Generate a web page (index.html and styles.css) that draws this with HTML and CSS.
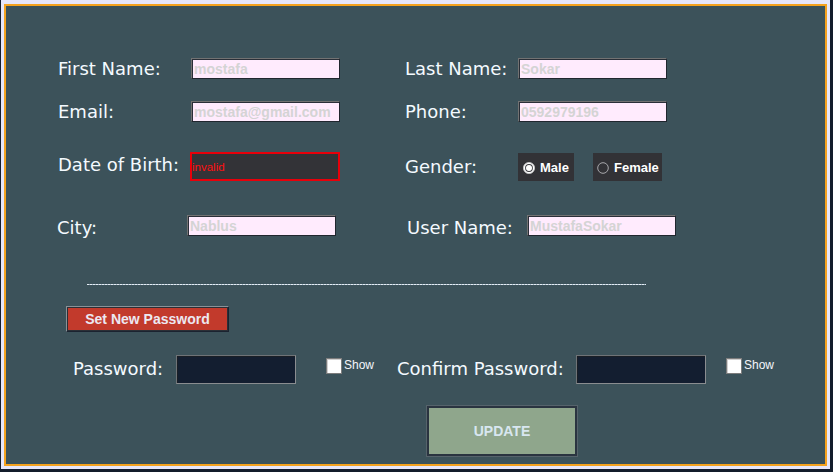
FILE: index.html
```html
<!DOCTYPE html>
<html lang="en">
<head>
<meta charset="utf-8">
<title>Update Profile</title>
<link rel="stylesheet" href="styles.css">
</head>
<body>
<div class="frame">
  <form class="panel">
    <div class="row row-a">
      <label class="lbl lbl-left">First Name:</label>
      <input class="field" type="text" value="mostafa" readonly>
      <label class="lbl lbl-right">Last Name:</label>
      <input class="field" type="text" value="Sokar" readonly>
    </div>
    <div class="row row-a row-2">
      <label class="lbl lbl-left">Email:</label>
      <input class="field" type="text" value="mostafa@gmail.com" readonly>
      <label class="lbl lbl-right">Phone:</label>
      <input class="field" type="text" value="0592979196" readonly>
    </div>
    <div class="row row-a row-3">
      <label class="lbl lbl-left lbl-dob">Date of Birth:</label>
      <div class="dob">invalid</div>
      <label class="lbl lbl-right lbl-gender">Gender:</label>
      <div class="radio radio-male">
        <svg class="radio-icon" width="12" height="12" viewBox="0 0 12 12"><circle cx="6" cy="6" r="5.6" fill="#ffffff" stroke="#c8c8c8" stroke-width="0.8"/><circle cx="6" cy="6" r="3.9" fill="#3a3a3e"/><circle cx="6" cy="6" r="3" fill="#ffffff"/></svg>
        <span>Male</span>
      </div>
      <div class="radio radio-female">
        <svg class="radio-icon" width="12" height="12" viewBox="0 0 12 12"><circle cx="6" cy="6" r="5.3" fill="none" stroke="#a8a8ac" stroke-width="1"/></svg>
        <span>Female</span>
      </div>
    </div>
    <div class="row row-4">
      <label class="lbl lbl-city">City:</label>
      <input class="field" type="text" value="Nablus" readonly>
      <label class="lbl lbl-user">User Name:</label>
      <input class="field" type="text" value="MustafaSokar" readonly>
    </div>
    <div class="separator"></div>
    <div class="row row-btn">
      <button type="button" class="btn-pass">Set New Password</button>
    </div>
    <div class="row row-pw">
      <label class="lbl lbl-pw">Password:</label>
      <div class="pw pw-1"></div>
      <span class="check"></span><span class="show">Show</span>
      <label class="lbl lbl-confirm">Confirm Password:</label>
      <div class="pw pw-2"></div>
      <span class="check check-2"></span><span class="show">Show</span>
    </div>
    <div class="row row-update">
      <button type="button" class="btn-update">UPDATE</button>
    </div>
  </form>
</div>
</body>
</html>
```
FILE: styles.css
```css
* { box-sizing: border-box; }

html, body {
  margin: 0;
  padding: 0;
}

body {
  background: #131c2b;
  width: 833px;
  height: 472px;
  overflow: hidden;
  font-family: "DejaVu Sans", Verdana, sans-serif;
}

.frame {
  margin: 0 3px 3px 1px;
  padding: 4px 3px 3px 3px;
  background: #e6e6fa;
  height: 469px;
}

.panel {
  margin: 0;
  height: 462px;
  border: 2px solid #f5a21e;
  background: #3c525a;
  padding-top: 52px;
  display: flex;
  flex-direction: column;
}

.row {
  display: flex;
  align-items: center;
}

.row-a {
  height: 21px;
  padding-left: 52px;
}

.row-2 { margin-top: 22px; }
.row-3 { margin-top: 30px; height: 29px; }

.lbl {
  color: #f4faff;
  font-size: 18px;
  line-height: 21px;
  white-space: nowrap;
  flex: none;
}

.lbl-left { width: 133px; }
.lbl-dob { width: 132px; padding-bottom: 4px; }
.lbl-right { width: 113px; margin-left: 65px; }
.lbl-gender { margin-left: 65px; }

.field {
  flex: none;
  width: 149px;
  height: 21px;
  margin: 0;
  padding: 0 2px;
  background: #ffebfd;
  border-style: solid;
  border-width: 1px;
  border-color: #727272 #20262e #20262e #727272;
  box-shadow: inset 1px 1px 0 #2a2f38;
  color: #d4d4d4;
  font-family: "Liberation Sans", Arial, sans-serif;
  font-weight: bold;
  font-size: 14px;
  outline: none;
}

.dob {
  flex: none;
  width: 150px;
  height: 29px;
  background: #333337;
  border: 2px solid #e8000a;
  color: #ff1010;
  font-family: "Liberation Sans", Arial, sans-serif;
  font-size: 11.5px;
  line-height: 27px;
  padding: 2px 0 0 0;
  display: flex;
  align-items: center;
}

.radio {
  flex: none;
  height: 28px;
  background: #323236;
  display: flex;
  align-items: center;
  color: #ffffff;
  font-family: "Liberation Sans", Arial, sans-serif;
  font-weight: bold;
  font-size: 13px;
  padding-top: 2px;
}

.radio-male { width: 56px; padding-left: 5px; }
.radio-female { width: 69px; padding-left: 4px; margin-left: 19px; }

.radio-icon { flex: none; margin-right: 5px; }

.row-4 {
  margin-top: 34px;
  height: 21px;
  padding-left: 51px;
}

.row-4 .lbl { padding-top: 4px; }
.lbl-city { width: 130px; }
.lbl-user { width: 120px; margin-left: 71px; }

.separator {
  margin: 48px 0 0 81px;
  width: 559px;
  height: 1px;
  background: repeating-linear-gradient(90deg, #e4ecf4 0 2px, #9fb2c2 2px 3px);
}

.row-btn {
  margin-top: 21px;
  padding-left: 60px;
}

.btn-pass {
  width: 163px;
  height: 26px;
  margin: 0;
  padding: 0;
  background: #c23a2c;
  border-style: solid;
  border-width: 1px;
  border-color: #8a9298 #1b2330 #1b2330 #8a9298;
  box-shadow: inset 0 0 0 1px #2b2f36;
  color: #ece8f2;
  font-family: "Liberation Sans", Arial, sans-serif;
  font-weight: bold;
  font-size: 14px;
}

.row-pw {
  margin-top: 23px;
  height: 29px;
  padding-left: 67px;
}

.row-pw .lbl { padding-bottom: 3px; }
.lbl-pw { width: 103px; }
.lbl-confirm { width: 179px; margin-left: 22px; }

.pw {
  flex: none;
  height: 29px;
  background: #131e30;
  border-style: solid;
  border-width: 1px;
  border-color: #6f7377 #8a8d90 #8a8d90 #6f7377;
  box-shadow: inset 1px 1px 0 #1a1f26;
}

.pw-1 { width: 120px; }
.pw-2 { width: 130px; }

.check {
  flex: none;
  align-self: flex-start;
  margin-top: 3px;
  margin-left: 30px;
  width: 16px;
  height: 16px;
  background: #ffffff;
  border: 1px solid #7c7c7c;
  box-shadow: inset 1px 1px 0 #d0d0d0;
}

.check-2 { margin-left: 20px; }

.show {
  flex: none;
  align-self: flex-start;
  margin-top: 3px;
  margin-left: 2px;
  width: 31px;
  color: #f4f6fa;
  font-family: "Liberation Sans", Arial, sans-serif;
  font-size: 12px;
  line-height: 14px;
}

.row-update {
  margin-top: 22px;
  padding-left: 421px;
}

.btn-update {
  width: 150px;
  height: 50px;
  margin: 0;
  padding: 0;
  background: #8fa68c;
  border: 2px solid #2a3440;
  box-shadow: 0 0 0 1px #56636b;
  color: #d8e6f0;
  font-family: "Liberation Sans", Arial, sans-serif;
  font-weight: bold;
  font-size: 14px;
}
```
